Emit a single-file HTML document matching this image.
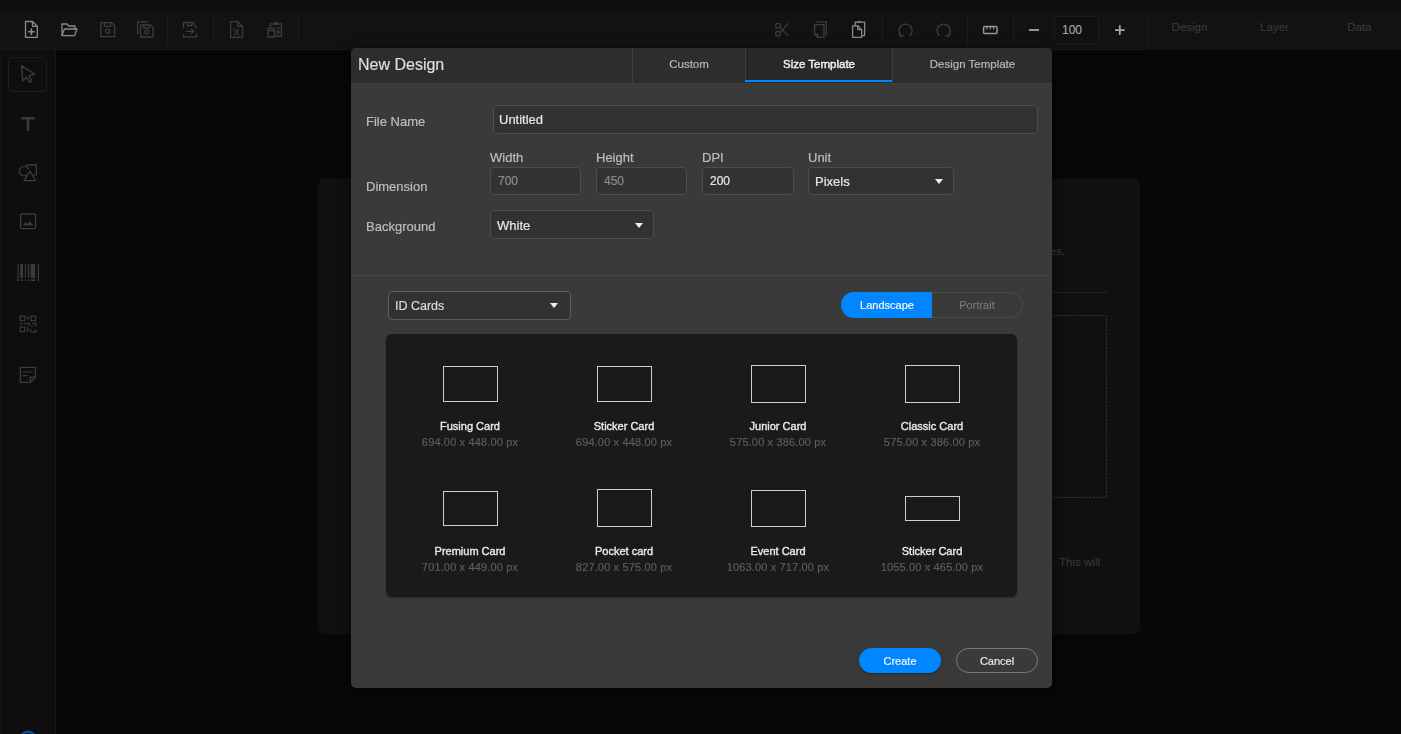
<!DOCTYPE html>
<html><head><meta charset="utf-8">
<style>
*{box-sizing:border-box;margin:0;padding:0}
html,body{width:1401px;height:734px;overflow:hidden;background:#070707;font-family:"Liberation Sans",sans-serif;position:relative}
.a{position:absolute}
#topstrip{left:0;top:0;width:1401px;height:11px;background:#0e0e0f}
#toolbar{left:0;top:11px;width:1401px;height:39px;background:#111214;border-bottom:1px solid #17181a}
.sep{position:absolute;top:6px;width:1px;height:31px;background:#1a1b1d}
#sidebar{left:0;top:50px;width:56px;height:684px;background:#0e0e0e;border-right:1px solid #161616;border-left:1px solid #131313}
#rpanel{left:1147px;top:11px;width:254px;height:39px;background:#111214;border-left:1px solid #17181a}
.rtab{position:absolute;top:0;height:39px;line-height:33px;font-size:11.5px;color:#3c3c3c;text-align:center;width:85px;margin-left:-1px}
#bgcard{left:318px;top:178px;width:822px;height:456px;background:#101010;border-radius:7px}
#modal{left:351px;top:48px;width:701px;height:640px;background:#3a3a3a;border-radius:5px;overflow:hidden;box-shadow:0 2px 12px rgba(0,0,0,.55)}
#mhead{left:0;top:0;width:701px;height:36px;background:#2d2d2d;border-bottom:1px solid #404040}
#mtitle{left:7px;top:0;line-height:34px;font-size:16px;color:#dedede;-webkit-text-stroke:0.2px #dedede}
.tab{position:absolute;top:0;height:35px;line-height:32px;font-size:11.5px;color:#b9b9b9;text-align:center;border-left:1px solid #3d3d3d;-webkit-text-stroke:0.2px currentColor}
.lbl{position:absolute;font-size:13px;color:#bdbdbd;white-space:nowrap;-webkit-text-stroke:0.2px #bdbdbd}
.inp{position:absolute;background:#323232;border:1px solid #4d4d4d;border-radius:4px;font-size:12px;color:#e6e6e6;white-space:nowrap;-webkit-text-stroke:0.2px currentColor}
.caret{position:absolute;width:0;height:0;border-left:4px solid transparent;border-right:4px solid transparent;border-top:5px solid #f0f0f0}
#grid{left:35px;top:286px;width:631px;height:263px;background:#1a1a1a;border-radius:6px;box-shadow:0 1px 2px rgba(0,0,0,.35)}
.card{position:absolute;width:154px;text-align:center}
.rect{position:absolute;border:1px solid #cecece}
.ct{position:absolute;left:0;width:154px;text-align:center;font-size:11px;color:#ececec;-webkit-text-stroke:0.35px #ececec;white-space:nowrap}
.cs{position:absolute;left:0;width:154px;text-align:center;font-size:11px;color:#5e5e5e;white-space:nowrap;letter-spacing:0.15px;-webkit-text-stroke:0.15px #5e5e5e}
.btn{position:absolute;height:25px;border-radius:13px;font-size:11px;text-align:center;line-height:24px}
</style></head>
<body>
<div id="topstrip" class="a"></div>
<div id="toolbar" class="a">
  <svg class="a" style="left:0;top:0" width="1147" height="39" viewBox="0 11 1147 39" fill="none" stroke-linecap="round" stroke-linejoin="round">
    <!-- new file -->
    <g stroke="#8c8c8c" stroke-width="1.3">
      <path d="M25.5 21.5 H32.5 L37.3 26.3 V37.3 H25.5 Z"/>
      <path d="M32.5 21.7 V26.3 H37.2"/>
      <path d="M31.4 29 V34.4 M28.7 31.7 H34.1" stroke-width="1.5"/>
    </g>
    <!-- folder -->
    <g stroke="#8c8c8c" stroke-width="1.3">
      <path d="M62 35.6 V24 H67 L68.6 26 H75 V28.8"/>
      <path d="M62 35.6 L64.4 29 H77 L74.6 35.6 Z"/>
    </g>
    <!-- save -->
    <g stroke="#3d3d3d" stroke-width="1.3">
      <path d="M100.8 22.6 H111.8 L114.6 25.8 V36.6 H100.8 Z"/>
      <path d="M104.3 22.8 V26.3 H110.8 V22.8"/>
      <circle cx="107.7" cy="31.3" r="2.1"/>
    </g>
    <!-- save as -->
    <g stroke="#3d3d3d" stroke-width="1.3">
      <path d="M137.6 33.8 V21.8 H148"/>
      <path d="M140.6 25 H150.4 L153 28 V37 H140.6 Z"/>
      <path d="M143.6 25.2 V28 H149 V25.2"/>
      <circle cx="146.7" cy="32.1" r="1.9"/>
    </g>
    <!-- save export -->
    <g stroke="#3d3d3d" stroke-width="1.3">
      <path d="M183.5 27.8 V22.5 H193.3 L196.5 27.6"/>
      <path d="M187.5 22.7 V25.6 H192 V22.7"/>
      <path d="M186.4 31.3 H193.6 M191.4 29.3 L193.8 31.3 L191.4 33.3"/>
      <path d="M183.5 34.4 V36.9 H196.6 V34.4"/>
    </g>
    <!-- excel file -->
    <g stroke="#3d3d3d" stroke-width="1.3">
      <path d="M230.6 21.7 H237.8 L242.5 26.4 V37.4 H230.6 Z"/>
      <path d="M237.8 21.9 V26.4 H242.4"/>
      <path d="M234.3 29.2 L238.6 34.8 M238.6 29.2 L234.3 34.8" stroke-width="1.1"/>
    </g>
    <!-- clipboard -->
    <g stroke="#3d3d3d" stroke-width="1.3">
      <path d="M270.3 28.2 V23.8 H281.4 V36 H274.6"/>
      <path d="M273.3 24 L275.9 22.2 L278.5 24 Z"/>
      <path d="M268 28.4 H274.5 V37 H268 Z"/>
      <path d="M268.4 30.6 H274" />
      <path d="M277 27.6 V28.6 M279.3 27.6 V28.6"/>
      <circle cx="278" cy="32" r="1.2"/>
    </g>
    <!-- separators -->
    <g stroke="#1b1c1e" stroke-width="1">
      <path d="M167.5 14 V45 M213.5 14 V45 M298.5 14 V45 M882.5 14 V45 M967.5 14 V45 M1013.5 14 V45"/>
    </g>
    <!-- scissors -->
    <g stroke="#3d3d3d" stroke-width="1.2">
      <circle cx="778" cy="25.8" r="2.4"/>
      <circle cx="778" cy="33.8" r="2.4"/>
      <path d="M780 27.3 L788.2 35.6 M780 32.3 L788.2 23.6"/>
    </g>
    <!-- copy -->
    <g stroke="#3d3d3d" stroke-width="1.3">
      <path d="M817 21.8 H826.3 V35.2"/>
      <path d="M814.6 24.6 H824 V37.4 H817.6 L814.6 34.4 Z"/>
      <path d="M814.8 34.4 H817.6 V37.2"/>
    </g>
    <!-- paste -->
    <g stroke="#8a8a8a" stroke-width="1.3">
      <path d="M855.2 25.5 V22.2 H864.6 V35.6 H862"/>
      <path d="M857.6 22.3 L859.3 21.4 L861 22.3" stroke-width="1.1"/>
      <path d="M852.6 25.8 H857.8 L861.7 29.7 V37.4 H852.6 Z"/>
      <path d="M857.8 26 V29.7 H861.5"/>
    </g>
    <!-- undo -->
    <g stroke="#3d3d3d" stroke-width="1.3">
      <path d="M900.8 35.2 A6.6 6.6 0 1 1 910 35.6"/>
      <path d="M899.4 33.4 L900.6 36.6 L903.4 35.8" />
    </g>
    <!-- redo -->
    <g stroke="#3d3d3d" stroke-width="1.3">
      <path d="M948.4 35.2 A6.6 6.6 0 1 0 939.2 35.6"/>
      <path d="M949.8 33.4 L948.6 36.6 L945.8 35.8"/>
    </g>
    <!-- ruler -->
    <g stroke="#979797" stroke-width="1.5">
      <rect x="983.6" y="26.4" width="13.4" height="7.2" rx="1"/>
      <path d="M987 26.6 V29 M990.3 26.6 V29 M993.6 26.6 V29" stroke-width="1.2"/>
    </g>
    <!-- minus / plus -->
    <g stroke="#a4a4a4" stroke-width="1.8" stroke-linecap="butt">
      <path d="M1029 30 H1039"/>
      <path d="M1115 30.1 H1124.6 M1119.8 25.2 V35"/>
    </g>
  </svg>
  <div class="a" style="left:1054px;top:5px;width:45px;height:28px;border:1px solid #1c1d1f;border-radius:4px;background:#0f1012;color:#a6a6a6;font-size:12px;line-height:27px;padding-left:7px;-webkit-text-stroke:0.15px #a6a6a6">100</div>
</div>
<div id="rpanel" class="a">
  <div class="rtab" style="left:0">Design</div>
  <div class="rtab" style="left:85px">Layer</div>
  <div class="rtab" style="left:170px">Data</div>
</div>
<div id="sidebar" class="a">
  <div class="a" style="left:7px;top:7px;width:39px;height:35px;border:1px solid #1d1d1d;border-radius:4px"></div>
  <svg class="a" style="left:-1px;top:0" width="55" height="684" viewBox="0 50 55 684" fill="none" stroke-linejoin="round" stroke-linecap="round">
    <!-- arrow -->
    <path d="M21.6 65.8 L34.6 74.2 L29 75.6 L31.6 81 L29.4 82.4 L26.7 77.2 L22.6 80.8 Z" stroke="#3b3b3b" stroke-width="1.4"/>
    <!-- T -->
    <path d="M21.6 118.2 H34.4 M28 118.2 V131" stroke="#3b3b3b" stroke-width="2.6" stroke-linecap="butt"/>
    <!-- shapes -->
    <g stroke="#3b3b3b" stroke-width="1.3">
      <path d="M27 175 A4.8 4.8 0 1 1 28.3 168.6"/>
      <path d="M26.8 165 H36.4 V174.8 H33.4"/>
      <path d="M29.8 171 L35.6 180.6 H24.2 Z"/>
    </g>
    <!-- image -->
    <g stroke="#3b3b3b" stroke-width="1.4">
      <rect x="20.6" y="214" width="15" height="14.6" rx="1.4"/>
    </g>
    <path d="M23 225.4 L25.6 222 L27.4 224 L29.6 221 L33.4 225.4 Z" fill="#3b3b3b"/>
    <!-- barcode -->
    <g fill="#3b3b3b">
      <rect x="17.4" y="264" width="1.2" height="17.2"/>
      <rect x="20.2" y="264" width="2.8" height="14"/>
      <rect x="24.8" y="264" width="1.1" height="14"/>
      <rect x="27.8" y="264" width="1.4" height="14"/>
      <rect x="30.6" y="264" width="4.6" height="14"/>
      <rect x="37.8" y="264" width="1.2" height="17.2"/>
      <rect x="20.2" y="279.4" width="2.8" height="1.6"/>
      <rect x="24.8" y="279.4" width="1.1" height="1.6"/>
      <rect x="27.8" y="279.4" width="1.4" height="1.6"/>
      <rect x="30.6" y="279.4" width="4.6" height="1.6"/>
    </g>
    <!-- qr -->
    <g stroke="#3b3b3b" stroke-width="1.2" stroke-linecap="butt" stroke-linejoin="miter">
      <rect x="20.2" y="316.2" width="4.6" height="4.6"/>
      <rect x="31" y="316.2" width="4.6" height="4.6"/>
      <rect x="20.2" y="327" width="4.6" height="4.6"/>
      <path d="M27.4 316 V318.6 H29 M20 323.6 H22.6 M24.4 323.6 H29.4 V326 M27.6 326.4 V331.8 M29.4 329 L31.8 331.8 H35.8 V329.6 M32.4 323.6 H35.8 V326.4 M31 326.4 H33"/>
    </g>
    <!-- note -->
    <g stroke="#3b3b3b" stroke-width="1.4">
      <path d="M20.4 367.4 H35.4 V377.2 L30.2 382.4 H20.4 Z"/>
      <path d="M23.2 372 H32.6 M23.2 375.6 H27.8" stroke-width="1.2"/>
      <path d="M30.2 382.2 V377.2 H35.2" stroke-width="1.2"/>
    </g>
    <circle cx="28" cy="739.4" r="7.6" stroke="#0a5199" stroke-width="2.4"/>
  </svg>
</div>
<div id="bgcard" class="a">
  <div class="a" style="left:0;top:66px;width:747px;text-align:right;font-size:11.5px;line-height:14px;color:#3a3a3a;white-space:nowrap">properties, shapes, images, barcodes, QR codes, notes, signatures, templates and sizes,</div>
  <div class="a" style="left:40px;top:114px;width:749px;height:1px;background:#222222"></div>
  <svg class="a" style="left:60px;top:137px" width="729" height="183"><rect x="0.5" y="0.5" width="728" height="182" fill="none" stroke="#333333" stroke-width="1" stroke-dasharray="2.2 1.4"/></svg>
  <div class="a" style="left:0;top:377px;width:782px;text-align:right;font-size:11.5px;line-height:14px;color:#3a3a3a;white-space:nowrap">Choose a size template or start from scratch with a custom size. This will</div>
</div>

<div id="modal" class="a" style="will-change:transform">
  <div id="mhead" class="a">
    <div id="mtitle" class="a">New Design</div>
    <div class="tab" style="left:281px;width:113px">Custom</div>
    <div class="tab" style="left:394px;width:148px;background:#282828;color:#f0f0f0;-webkit-text-stroke:0.45px #f0f0f0;border-right:1px solid #3d3d3d">Size Template<div class="a" style="left:-1px;bottom:1px;width:147px;height:2px;background:#0087ff"></div></div>
    <div class="tab" style="left:542px;width:159px;border-left:none">Design Template</div>
  </div>
  <!-- form -->
  <div class="lbl" style="left:15px;top:66px;line-height:15px">File Name</div>
  <div class="inp" style="left:142px;top:57px;width:545px;height:29px;padding-left:5px;line-height:27px;font-size:13px;-webkit-text-stroke:0.2px #e6e6e6">Untitled</div>

  <div class="lbl" style="left:139px;top:102px;line-height:15px">Width</div>
  <div class="lbl" style="left:245px;top:102px;line-height:15px">Height</div>
  <div class="lbl" style="left:351px;top:102px;line-height:15px">DPI</div>
  <div class="lbl" style="left:457px;top:102px;line-height:15px">Unit</div>
  <div class="lbl" style="left:15px;top:131px;line-height:15px">Dimension</div>
  <div class="inp" style="left:139px;top:119px;width:91px;height:28px;padding-left:7px;line-height:26px;color:#8a8a8a">700</div>
  <div class="inp" style="left:245px;top:119px;width:91px;height:28px;padding-left:7px;line-height:26px;color:#8a8a8a">450</div>
  <div class="inp" style="left:351px;top:119px;width:92px;height:28px;padding-left:7px;line-height:26px">200</div>
  <div class="inp" style="left:457px;top:119px;width:146px;height:28px;padding-left:6px;line-height:28px;font-size:13px">Pixels<div class="caret" style="left:126px;top:11px"></div></div>

  <div class="lbl" style="left:15px;top:171px;line-height:15px">Background</div>
  <div class="inp" style="left:139px;top:162px;width:164px;height:29px;padding-left:6px;line-height:29px;font-size:13px">White<div class="caret" style="left:144px;top:12px"></div></div>

  <div class="a" style="left:0;top:227px;width:701px;height:1px;background:#454545"></div>

  <!-- template area -->
  <div class="inp" style="left:37px;top:243px;width:183px;height:29px;padding-left:6px;line-height:29px;font-size:12.5px;border-color:#5e5e5e;color:#dadada">ID Cards<div class="caret" style="left:161px;top:11px"></div></div>

  <div class="a" style="left:490px;top:244px;width:182px;height:26px">
    <div class="a" style="left:0;top:0;width:182px;height:26px;border:1px solid #4c4c4c;border-radius:13px"></div>
    <div class="a" style="left:0;top:0;width:91px;height:26px;background:#0087ff;color:#f4f4f4;font-size:11px;line-height:26px;text-align:center;border-radius:13px 0 0 13px;-webkit-text-stroke:0.2px #f4f4f4;padding-left:1px">Landscape</div>
    <div class="a" style="left:91px;top:0;width:90px;height:26px;color:#7e7e7e;font-size:11px;line-height:26px;text-align:center">Portrait</div>
  </div>

  <div id="grid" class="a">
    <div class="card" style="left:7px;top:0">
      <div class="rect" style="left:50px;top:32px;width:55px;height:36px"></div>
      <div class="ct" style="top:86px;line-height:13px">Fusing Card</div>
      <div class="cs" style="top:102px;line-height:13px">694.00 x 448.00 px</div>
    </div>
    <div class="card" style="left:161px;top:0">
      <div class="rect" style="left:50px;top:32px;width:55px;height:36px"></div>
      <div class="ct" style="top:86px;line-height:13px">Sticker Card</div>
      <div class="cs" style="top:102px;line-height:13px">694.00 x 448.00 px</div>
    </div>
    <div class="card" style="left:315px;top:0">
      <div class="rect" style="left:50px;top:31px;width:55px;height:38px"></div>
      <div class="ct" style="top:86px;line-height:13px">Junior Card</div>
      <div class="cs" style="top:102px;line-height:13px">575.00 x 386.00 px</div>
    </div>
    <div class="card" style="left:469px;top:0">
      <div class="rect" style="left:50px;top:31px;width:55px;height:38px"></div>
      <div class="ct" style="top:86px;line-height:13px">Classic Card</div>
      <div class="cs" style="top:102px;line-height:13px">575.00 x 386.00 px</div>
    </div>

    <div class="card" style="left:7px;top:0">
      <div class="rect" style="left:50px;top:157px;width:55px;height:35px"></div>
      <div class="ct" style="top:211px;line-height:13px">Premium Card</div>
      <div class="cs" style="top:227px;line-height:13px">701.00 x 449.00 px</div>
    </div>
    <div class="card" style="left:161px;top:0">
      <div class="rect" style="left:50px;top:155px;width:55px;height:38px"></div>
      <div class="ct" style="top:211px;line-height:13px">Pocket card</div>
      <div class="cs" style="top:227px;line-height:13px">827.00 x 575.00 px</div>
    </div>
    <div class="card" style="left:315px;top:0">
      <div class="rect" style="left:50px;top:156px;width:55px;height:37px"></div>
      <div class="ct" style="top:211px;line-height:13px">Event Card</div>
      <div class="cs" style="top:227px;line-height:13px">1063.00 x 717.00 px</div>
    </div>
    <div class="card" style="left:469px;top:0">
      <div class="rect" style="left:50px;top:162px;width:55px;height:25px"></div>
      <div class="ct" style="top:211px;line-height:13px">Sticker Card</div>
      <div class="cs" style="top:227px;line-height:13px">1055.00 x 465.00 px</div>
    </div>
  </div>

  <div class="btn" style="left:508px;top:600px;width:82px;background:#0087ff;color:#f4f4f4;line-height:26px;-webkit-text-stroke:0.2px #f4f4f4;box-shadow:0 1px 3px rgba(0,0,0,.35)">Create</div>
  <div class="btn" style="left:605px;top:600px;width:82px;border:1px solid #7a7a7a;color:#e8e8e8;line-height:24px;-webkit-text-stroke:0.2px #e8e8e8">Cancel</div>
</div>
</body></html>
